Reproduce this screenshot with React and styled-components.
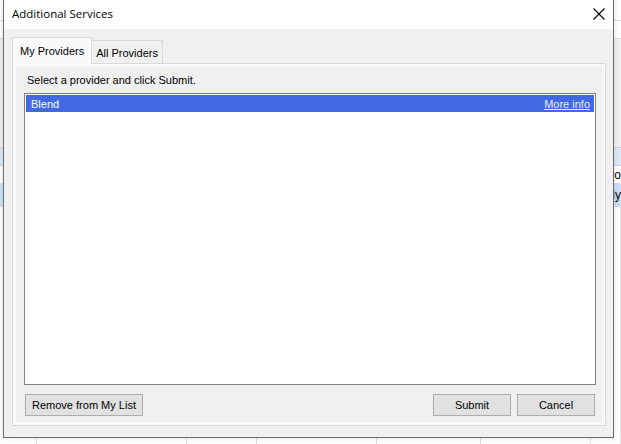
import React from 'react';
import styled, { createGlobalStyle } from 'styled-components';

const Global = createGlobalStyle`
  html, body { margin: 0; padding: 0; }
  body { width: 621px; height: 444px; overflow: hidden; background: #fff; }
`;

const Desktop = styled.div`
  position: relative;
  width: 621px;
  height: 444px;
  overflow: hidden;
  background: #ffffff;
  font-family: "Liberation Sans", Arial, sans-serif;
`;

/* the application behind the dialog, only its edges show */
const BackApp = styled.div`
  display: flex;
  flex-direction: column;
  width: 100%;
  height: 100%;
  background: #f3f3f3;
`;

const BackRow = styled.div`
  height: ${({ $h }) => $h}px;
  flex: none;
  background: ${({ $bg }) => $bg};
  border-bottom: 1px solid ${({ $line }) => $line || '#dcdcdc'};
  display: flex;
  justify-content: flex-end;
  align-items: center;
  font-size: 12px;
  color: #000;
`;

const BackGrid = styled.div`
  flex: 1;
  display: grid;
  grid-template-columns: 37px 150px 70px 120px 104px 110px 1fr;
  background: #fff;
  div { border-right: 1px solid #e4e4e4; }
`;

const Window = styled.div`
  position: absolute;
  left: 3px;
  top: -1px;
  width: 609px;
  height: 437px;
  border: 1px solid #6b6b6b;
  background: #f0f0f0;
  display: flex;
  flex-direction: column;
  box-shadow: 0 0 6px rgba(0, 0, 0, 0.12);
`;

const TitleBar = styled.div`
  height: 29px;
  flex: none;
  background: #ffffff;
  display: flex;
  align-items: center;
  justify-content: space-between;
  padding: 0 8px 0 8px;
`;

const Title = styled.span`
  font-family: "Open Sans", "Segoe UI", sans-serif;
  font-size: 11.5px;
  color: #000;
  margin-top: -2px;
`;

const CloseButton = styled.button`
  border: none;
  background: transparent;
  padding: 0;
  width: 14px;
  height: 14px;
  margin-right: -1px;
  margin-top: -2px;
  display: flex;
  align-items: center;
  justify-content: center;
`;

const Body = styled.div`
  flex: 1;
  display: flex;
  flex-direction: column;
  padding: 8px 7px 11px 8px;
  font-size: 11px;
`;

const TabStrip = styled.div`
  display: flex;
  align-items: flex-end;
  height: 27px;
  flex: none;
  position: relative;
  z-index: 1;
  margin-bottom: -1px;
`;

const Tab = styled.div`
  display: flex;
  align-items: center;
  box-sizing: border-box;
  border: 1px solid #d9d9d9;
  border-bottom: ${({ $active }) => ($active ? 'none' : '1px solid #d9d9d9')};
  border-left: ${({ $active }) => ($active ? '1px solid #d9d9d9' : 'none')};
  background: ${({ $active }) => ($active ? '#f9f9f9' : '#f0f0f0')};
  padding: ${({ $active }) => ($active ? '0 7px' : '2px 4px 0')};
  height: ${({ $active }) => ($active ? 27 : 24)}px;
  color: #000;
`;

const Panel = styled.div`
  flex: 1;
  border: 1px solid #d9d9d9;
  background: #f9f9f9;
  padding: 3px;
  display: flex;
`;

const PanelInner = styled.div`
  flex: 1;
  background: #f0f0f0;
  display: flex;
  flex-direction: column;
  padding: 6px 6px 6px 8px;
`;

const Hint = styled.div`
  padding-left: 3px;
  height: 14px;
  line-height: 14px;
  color: #000;
`;

const ListBox = styled.div`
  margin-top: 6px;
  height: 288px;
  flex: none;
  border: 1px solid #828282;
  background: #fff;
  padding: 1px;
`;

const ListRow = styled.div`
  height: 17px;
  display: flex;
  align-items: center;
  justify-content: space-between;
  padding: 0 4px 0 5px;
  background: ${({ $selected }) => ($selected ? '#4169e1' : 'transparent')};
  color: ${({ $selected }) => ($selected ? '#ffffff' : '#000')};
`;

const MoreInfo = styled.a`
  color: #e8e8ff;
  text-decoration: underline;
  cursor: pointer;
`;

const ButtonRow = styled.div`
  display: flex;
  gap: 6px;
  margin-top: 9px;
  padding: 0 1px;
`;

const Spacer = styled.div`
  flex: 1;
`;

const Button = styled.button`
  height: 22px;
  width: ${({ $w }) => $w}px;
  border: 1px solid #adadad;
  background: #e1e1e1;
  font-family: "Liberation Sans", Arial, sans-serif;
  font-size: 11px;
  color: #000;
  padding: 0;
`;

export default function App() {
  return (
    <>
      <Global />
      <Desktop>
        <BackApp>
          <BackRow $h={20} $bg="#ffffff" />
          <BackRow $h={17} $bg="#ffffff" />
          <BackRow $h={108} $bg="#f0f0f0" $line="#cfcfcf" />
          <BackRow $h={17} $bg="#dde8f6" $line="#c9d6e8" />
          <BackRow $h={17} $bg="#ffffff">ro</BackRow>
          <BackRow $h={22} $bg="#cddff5">ly</BackRow>
          <BackGrid>
            <div /><div /><div /><div /><div /><div /><div />
          </BackGrid>
        </BackApp>

        <Window>
          <TitleBar>
            <Title>Additional Services</Title>
            <CloseButton aria-label="Close">
              <svg width="12" height="12" viewBox="0 0 12 12">
                <path d="M0.5 0.5 L11.5 11.5 M11.5 0.5 L0.5 11.5" stroke="#000" strokeWidth="1.1" fill="none" />
              </svg>
            </CloseButton>
          </TitleBar>
          <Body>
            <TabStrip>
              <Tab $active>My Providers</Tab>
              <Tab>All Providers</Tab>
            </TabStrip>
            <Panel>
              <PanelInner>
                <Hint>Select a provider and click Submit.</Hint>
                <ListBox>
                  <ListRow $selected>
                    <span>Blend</span>
                    <MoreInfo>More info</MoreInfo>
                  </ListRow>
                </ListBox>
                <ButtonRow>
                  <Button $w={118}>Remove from My List</Button>
                  <Spacer />
                  <Button $w={78}>Submit</Button>
                  <Button $w={78}>Cancel</Button>
                </ButtonRow>
              </PanelInner>
            </Panel>
          </Body>
        </Window>
      </Desktop>
    </>
  );
}
